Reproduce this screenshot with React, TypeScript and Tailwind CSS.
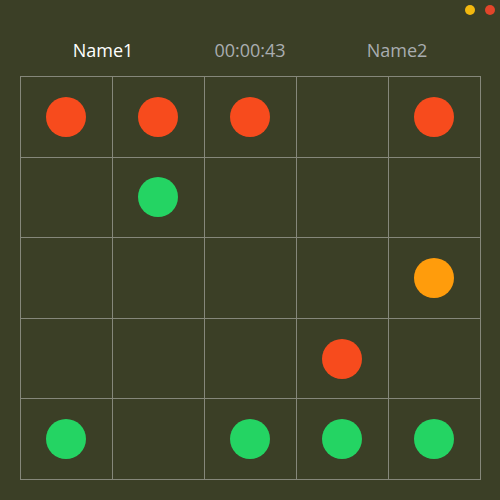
const cells: (string | null)[][] = [
  ["red", "red", "red", null, "red"],
  [null, "green", null, null, null],
  [null, null, null, null, "orange"],
  [null, null, null, "red", null],
  ["green", null, "green", "green", "green"],
];

const colorClass: Record<string, string> = {
  red: "bg-[#f74b1d]",
  green: "bg-[#24d463]",
  orange: "bg-[#ff9c0c]",
};

export default function App() {
  return (
    <div
      className="w-[500px] h-[500px] bg-[#3b3f26] flex flex-col"
      style={{ fontFamily: '"Segoe UI", "Open Sans", "Noto Sans", sans-serif' }}
    >
      {/* window buttons */}
      <div className="h-[20px] flex items-center justify-end gap-[10px] pr-[5px]">
        <span className="w-[10px] h-[10px] rounded-full bg-[#f2b80f]" />
        <span className="w-[10px] h-[10px] rounded-full bg-[#e2452a]" />
      </div>

      {/* players + timer */}
      <div className="h-[56px] pt-[4px] mx-auto w-[441px] grid grid-cols-3 items-center text-center text-[18px]">
        <span className="text-white">Name1</span>
        <span className="text-[#a9adb0]">00:00:43</span>
        <span className="text-[#a9adb0]">Name2</span>
      </div>

      {/* board */}
      <div className="mx-auto w-[461px] h-[404px] grid grid-cols-5 grid-rows-5 border-r border-b border-[#85877a]">
        {cells.flatMap((row, r) =>
          row.map((c, i) => (
            <div
              key={`${r}-${i}`}
              className="border-l border-t border-[#85877a] flex items-center justify-center"
            >
              {c && <span className={`w-[40px] h-[40px] rounded-full ${colorClass[c]}`} />}
            </div>
          ))
        )}
      </div>
    </div>
  );
}
